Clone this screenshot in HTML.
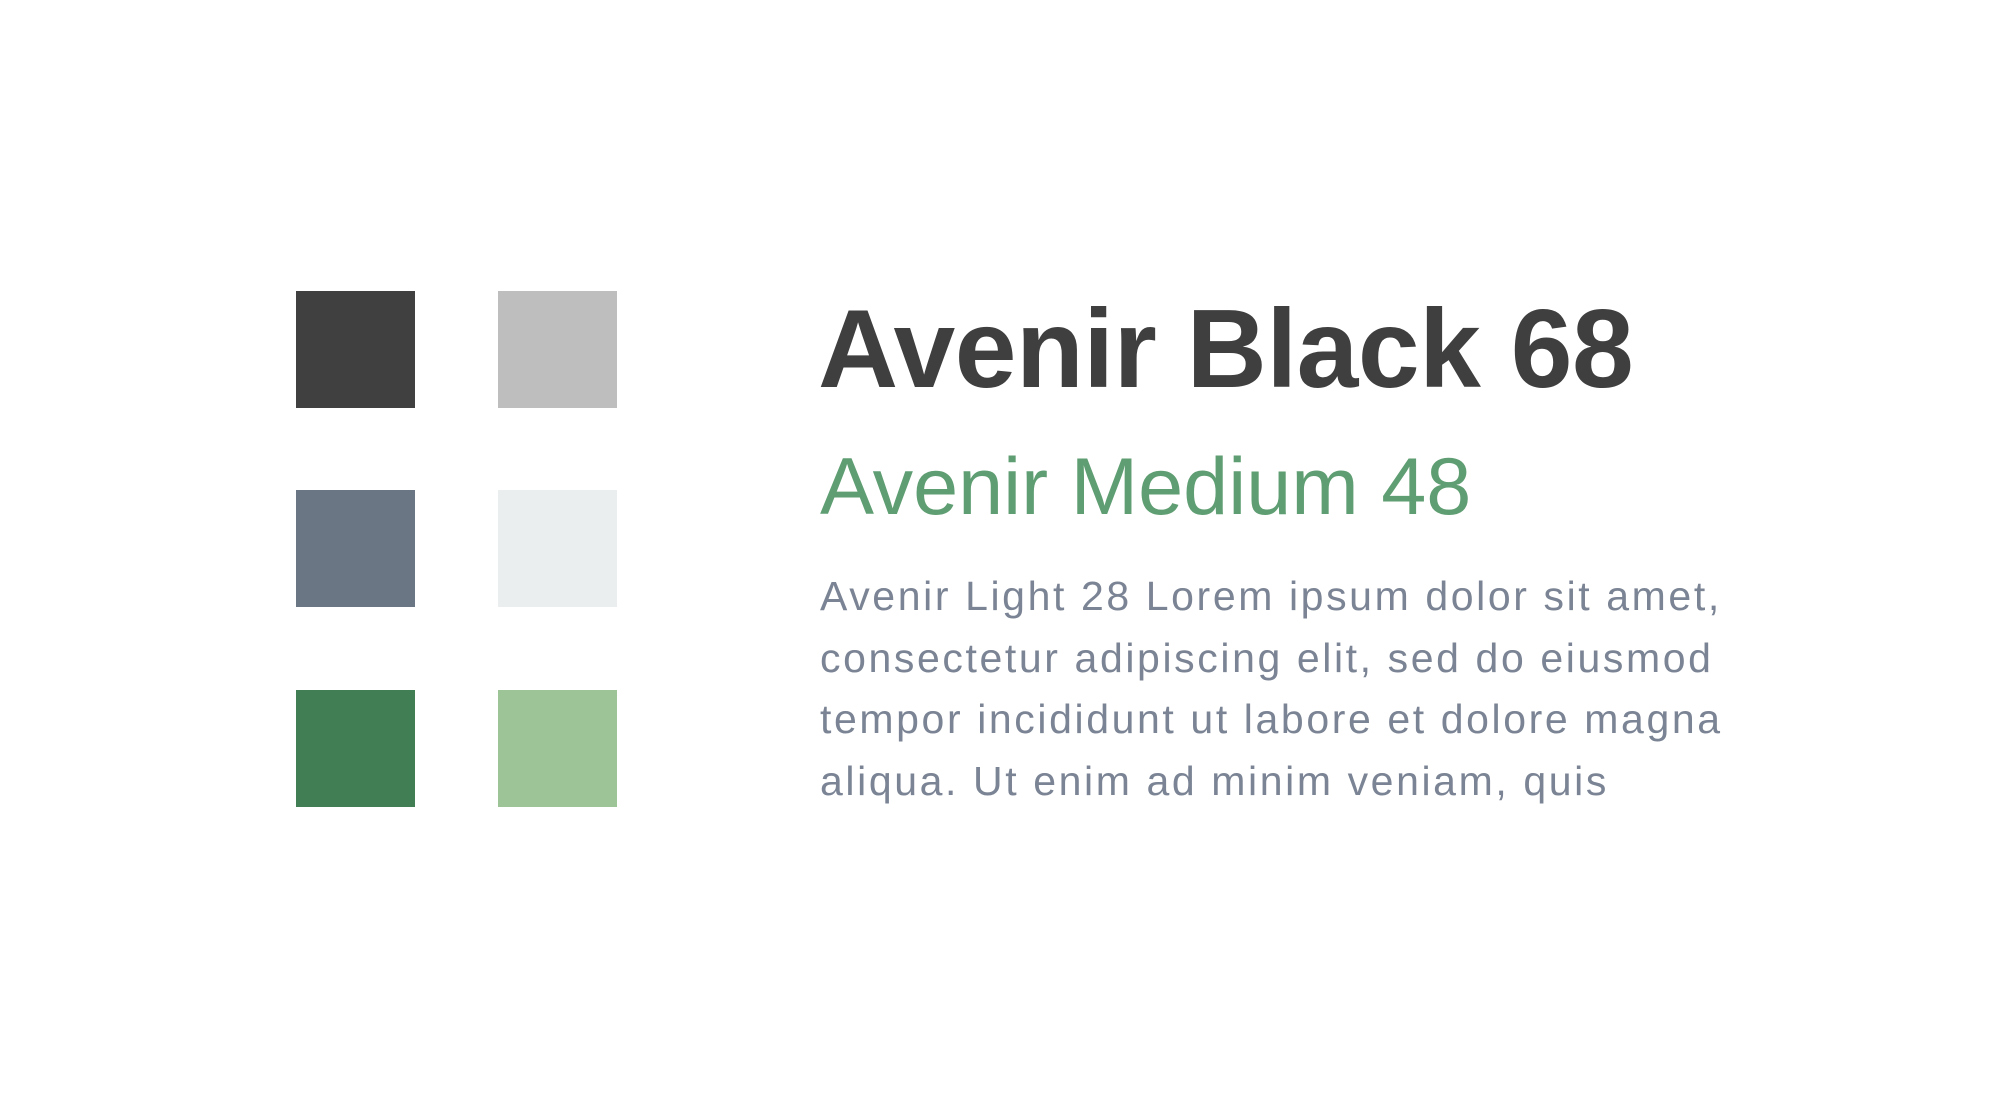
<!DOCTYPE html>
<html><head><meta charset="utf-8"><style>
html,body{margin:0;padding:0;background:#fff;width:1992px;height:1112px;overflow:hidden;position:relative;font-family:"Liberation Sans",sans-serif}
.s{position:absolute;width:119px;height:117px}
.t{position:absolute;white-space:nowrap;line-height:1}
</style></head><body>
<div class="s" style="left:296px;top:291px;background:#404040"></div>
<div class="s" style="left:498px;top:291px;background:#bebebe"></div>
<div class="s" style="left:296px;top:490px;background:#6b7685"></div>
<div class="s" style="left:498px;top:490px;background:#ebeeef"></div>
<div class="s" style="left:296px;top:690px;background:#417e53"></div>
<div class="s" style="left:498px;top:690px;background:#9cc496"></div>
<div class="t" style="left:818px;top:294px;font-size:111px;font-weight:bold;color:#3f3f3f;letter-spacing:-0.5px">Avenir Black 68</div>
<div class="t" style="left:820px;top:447px;font-size:81px;color:#5f9e72">Avenir Medium 48</div>
<div class="t" style="left:820px;top:566px;font-size:41px;color:#7b8494;line-height:61.5px;letter-spacing:2.6px">Avenir Light 28 Lorem ipsum dolor sit amet,<br>consectetur adipiscing elit, sed do eiusmod<br>tempor incididunt ut labore et dolore magna<br>aliqua. Ut enim ad minim veniam, quis</div>
</body></html>
